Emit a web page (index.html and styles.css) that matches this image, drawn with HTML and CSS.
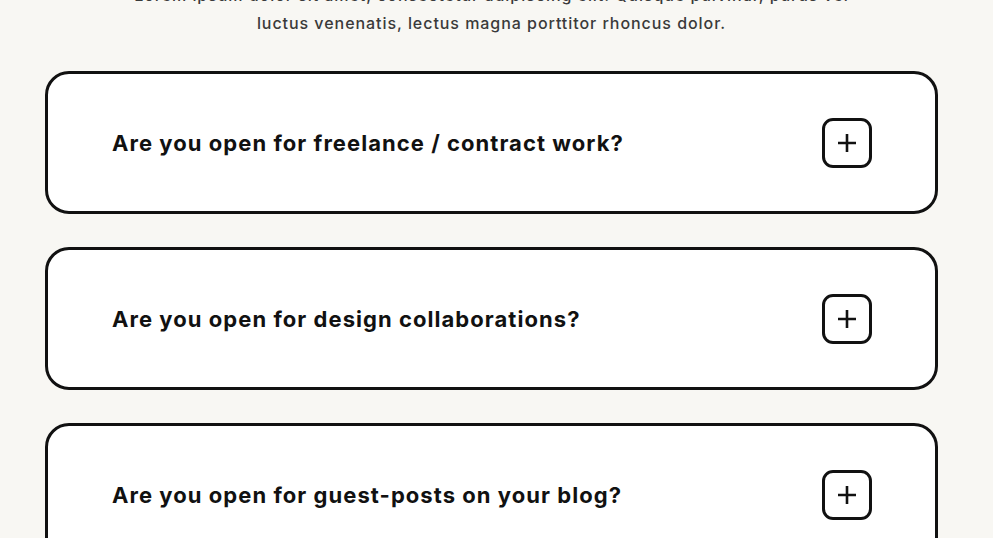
FILE: index.html
```html
<!DOCTYPE html>
<html lang="en">
<head>
<meta charset="utf-8">
<title>FAQ</title>
<link rel="stylesheet" href="styles.css">
</head>
<body>
<main class="faq">
  <p class="intro">Lorem ipsum dolor sit amet, consectetur adipiscing elit. Quisque pulvinar, purus vel<br>luctus venenatis, lectus magna porttitor rhoncus dolor.</p>
  <div class="list">
    <div class="item">
      <h3 class="question">Are you open for freelance / contract work?</h3>
      <button class="toggle" aria-label="Expand">
        <svg width="22" height="22" viewBox="0 0 22 22"><path d="M11 2v18M2 11h18" stroke="#111" stroke-width="2.6" fill="none"/></svg>
      </button>
    </div>
    <div class="item">
      <h3 class="question">Are you open for design collaborations?</h3>
      <button class="toggle" aria-label="Expand">
        <svg width="22" height="22" viewBox="0 0 22 22"><path d="M11 2v18M2 11h18" stroke="#111" stroke-width="2.6" fill="none"/></svg>
      </button>
    </div>
    <div class="item">
      <h3 class="question">Are you open for guest-posts on your blog?</h3>
      <button class="toggle" aria-label="Expand">
        <svg width="22" height="22" viewBox="0 0 22 22"><path d="M11 2v18M2 11h18" stroke="#111" stroke-width="2.6" fill="none"/></svg>
      </button>
    </div>
  </div>
</main>
</body>
</html>
```
FILE: styles.css
```css
html, body {
  margin: 0;
  padding: 0;
  background: #f8f7f3;
  overflow: hidden;
}
body {
  font-family: Inter, "Liberation Sans", sans-serif;
  color: #111;
}
.faq {
  width: 893px;
  margin-left: 45px;
}
.intro {
  margin: -19px 0 0;
  text-align: center;
  font-size: 16px;
  line-height: 28px;
  font-weight: 500;
  letter-spacing: 0.95px;
  color: #3a3a3a;
}
.list {
  margin-top: 34px;
  display: flex;
  flex-direction: column;
  gap: 33px;
}
.item {
  box-sizing: border-box;
  height: 143px;
  border: 3px solid #111;
  border-radius: 24px;
  background: #fff;
  display: flex;
  align-items: center;
  justify-content: space-between;
  padding: 0 63px 0 64px;
}
.question {
  margin: 0;
  font-size: 22px;
  font-weight: 700;
  letter-spacing: 1.05px;
  color: #111;
}
.toggle {
  box-sizing: border-box;
  width: 50px;
  height: 50px;
  border: 3px solid #111;
  border-radius: 11px;
  background: #fff;
  padding: 0;
  display: flex;
  align-items: center;
  justify-content: center;
}
.toggle svg { display: block; }
```
